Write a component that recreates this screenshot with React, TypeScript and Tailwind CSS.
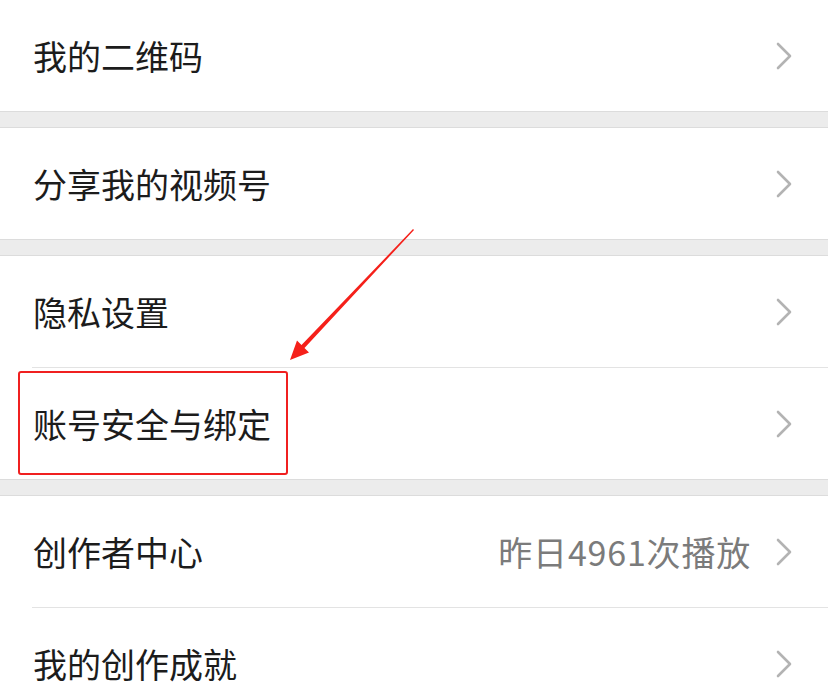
import React from "react";

type Row = { label: string; value?: string; divider?: boolean; boxed?: boolean };

const groups: Row[][] = [
  [{ label: "我的二维码" }],
  [{ label: "分享我的视频号" }],
  [{ label: "隐私设置" }, { label: "账号安全与绑定", divider: true, boxed: true }],
  [
    { label: "创作者中心", value: "昨日4961次播放" },
    { label: "我的创作成就", divider: true },
  ],
];

const Chevron = () => (
  <svg width="18" height="28" viewBox="0 0 18 28" className="shrink-0">
    <path d="M3 2 L15 14 L3 26" fill="none" stroke="#b3b3b3" strokeWidth="2.6" strokeLinecap="round" strokeLinejoin="round" />
  </svg>
);

const MenuRow = ({ row }: { row: Row }) => (
  <div className="relative">
    {row.divider && <div className="ml-8 h-px bg-[#e3e3e3]" />}
    <div className="flex h-[111px] items-center pl-[33px] pr-[35px]">
      <span className="flex-1 text-[34px] leading-none text-[#1c1c1c]">{row.label}</span>
      {row.value && (
        <span className="mr-[24px] text-[34px] leading-none tracking-[0.8px] text-[#7b7b7b]">{row.value}</span>
      )}
      <Chevron />
    </div>
    {row.boxed && (
      <div className="absolute left-[18px] top-[4px] h-[104px] w-[270px] rounded-[3px] border-2 border-[#f02020]" />
    )}
  </div>
);

export default function App() {
  return (
    <div
      className="relative h-[700px] w-[828px] overflow-hidden bg-white"
      style={{ fontFamily: '"Noto Sans CJK SC", "Noto Sans", sans-serif' }}
    >
      {groups.map((g, i) => (
        <div key={i}>
          {i > 0 && <div className="h-[17px] border-y border-[#dcdcdc] bg-[#ececec]" />}
          <div className="bg-white">
            {g.map((r) => (
              <MenuRow key={r.label} row={r} />
            ))}
          </div>
        </div>
      ))}
      <svg className="pointer-events-none absolute left-0 top-0" width="828" height="700">
        <polygon points="413,229 411.6,230.6 301.5,345 297,340.5 290,360 309,352.5 304.5,348 414,230" fill="#f5201a" />
      </svg>
    </div>
  );
}
